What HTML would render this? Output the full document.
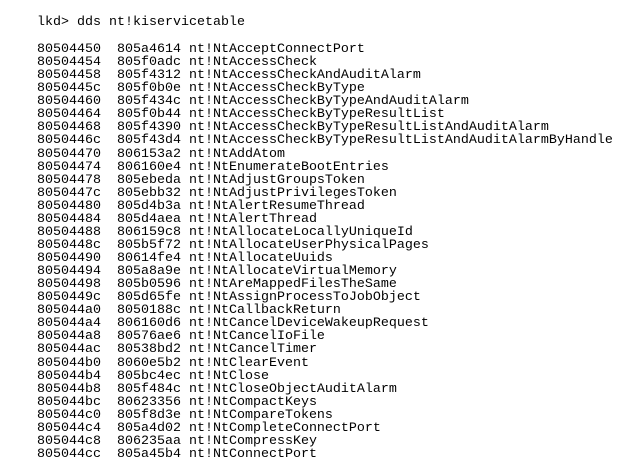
<!DOCTYPE html>
<html><head><meta charset="utf-8"><style>
html,body{margin:0;padding:0;background:#fff;width:628px;height:461px;overflow:hidden}
pre{position:absolute;left:37px;margin:0;font-family:"Liberation Mono",monospace;font-size:13.33px;line-height:13.06px;color:#000}
</style></head><body>
<pre style="top:16px">lkd&gt; dds nt!kiservicetable</pre>
<pre style="top:43px">80504450  805a4614 nt!NtAcceptConnectPort
80504454  805f0adc nt!NtAccessCheck
80504458  805f4312 nt!NtAccessCheckAndAuditAlarm
8050445c  805f0b0e nt!NtAccessCheckByType
80504460  805f434c nt!NtAccessCheckByTypeAndAuditAlarm
80504464  805f0b44 nt!NtAccessCheckByTypeResultList
80504468  805f4390 nt!NtAccessCheckByTypeResultListAndAuditAlarm
8050446c  805f43d4 nt!NtAccessCheckByTypeResultListAndAuditAlarmByHandle
80504470  806153a2 nt!NtAddAtom
80504474  806160e4 nt!NtEnumerateBootEntries
80504478  805ebeda nt!NtAdjustGroupsToken
8050447c  805ebb32 nt!NtAdjustPrivilegesToken
80504480  805d4b3a nt!NtAlertResumeThread
80504484  805d4aea nt!NtAlertThread
80504488  806159c8 nt!NtAllocateLocallyUniqueId
8050448c  805b5f72 nt!NtAllocateUserPhysicalPages
80504490  80614fe4 nt!NtAllocateUuids
80504494  805a8a9e nt!NtAllocateVirtualMemory
80504498  805b0596 nt!NtAreMappedFilesTheSame
8050449c  805d65fe nt!NtAssignProcessToJobObject
805044a0  8050188c nt!NtCallbackReturn
805044a4  806160d6 nt!NtCancelDeviceWakeupRequest
805044a8  80576ae6 nt!NtCancelIoFile
805044ac  80538bd2 nt!NtCancelTimer
805044b0  8060e5b2 nt!NtClearEvent
805044b4  805bc4ec nt!NtClose
805044b8  805f484c nt!NtCloseObjectAuditAlarm
805044bc  80623356 nt!NtCompactKeys
805044c0  805f8d3e nt!NtCompareTokens
805044c4  805a4d02 nt!NtCompleteConnectPort
805044c8  806235aa nt!NtCompressKey
805044cc  805a45b4 nt!NtConnectPort</pre>
</body></html>
